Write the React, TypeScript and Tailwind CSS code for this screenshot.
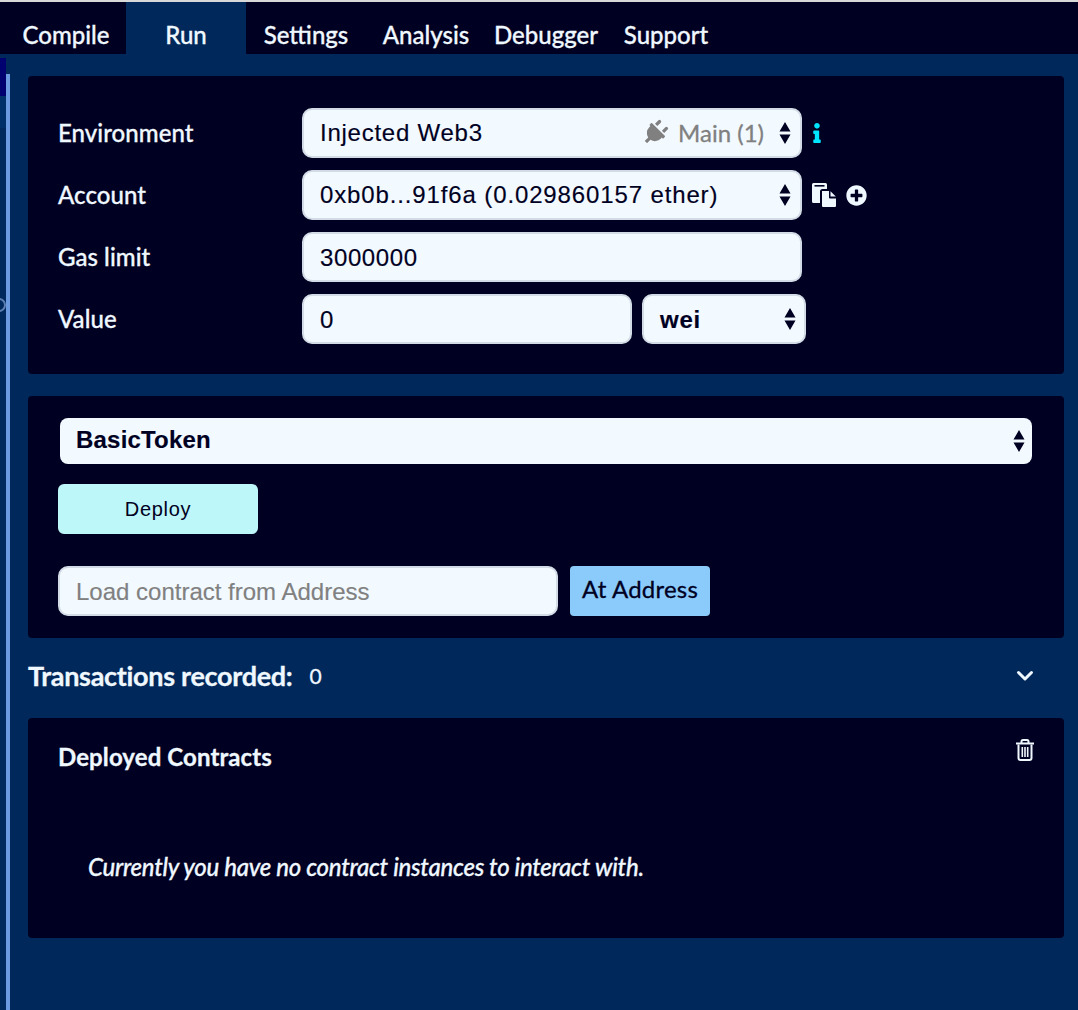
import React from "react";
import { FaInfo, FaPlug, FaPlusCircle } from "react-icons/fa";

const lato = "font-['Lato','Open_Sans',sans-serif] [-webkit-text-stroke-width:0.3px]";
const field = "font-['Liberation_Sans','Arial',sans-serif] text-[24px] text-[#000022] [-webkit-text-stroke-width:0.15px]";
const box = "flex items-center rounded-[10px] border-2 border-[#d3dce6] bg-[#f2f9ff]";

/* ===== Icons ===== */
const Arrows = ({ className = "" }: { className?: string }) => (
  <svg viewBox="0 0 12 24" className={`h-[24px] w-[12px] shrink-0 fill-[#000022] ${className}`}>
    <path d="M6 1l5.5 9.5H.5zM6 23L.5 13.5h11z" />
  </svg>
);

const PasteIcon = () => (
  <svg viewBox="0 0 26 26" className="h-[26px] w-[26px] shrink-0" fill="#f0f8ff">
    <path d="M1 2.5A1.5 1.5 0 0 1 2.5 1h12A1.5 1.5 0 0 1 16 2.5V7h-4.5A2.5 2.5 0 0 0 9 9.5V21H2.5A1.5 1.5 0 0 1 1 19.5Z" />
    <rect x="3.5" y="3" width="10" height="1.6" fill="#000022" />
    <path d="M11 9h7v6.5a1 1 0 0 0 1 1h6V24a1 1 0 0 1-1 1H12a1 1 0 0 1-1-1Z" />
    <path d="M19.5 9.2 24.8 14.5H19.5Z" />
  </svg>
);

const ChevronIcon = () => (
  <svg viewBox="0 0 18 12" className="h-[12px] w-[18px]" fill="none" stroke="#f0f8ff" strokeWidth="3" strokeLinecap="round" strokeLinejoin="round">
    <path d="M2.5 2.5 9 9l6.5-6.5" />
  </svg>
);

const TrashIcon = () => (
  <svg viewBox="0 0 20 22" className="absolute right-[29px] top-[21px] h-[22px] w-[20px]" fill="none" stroke="#f0f8ff" strokeWidth="2">
    <path d="M3.5 5.5V19a2 2 0 0 0 2 2h9a2 2 0 0 0 2-2V5.5" />
    <path d="M1 4.5h18" />
    <path d="M6.5 4V2.5a1.5 1.5 0 0 1 1.5-1.5h4a1.5 1.5 0 0 1 1.5 1.5V4" />
    <path d="M7.3 8v10M10 8v10M12.7 8v10" strokeWidth="1.6" />
  </svg>
);

/* ===== Bits ===== */
function Label({ children }: { children: React.ReactNode }) {
  return <div className={`w-[244px] shrink-0 ${lato} text-[24px] font-medium tracking-[0.05px] text-[#f0f8ff]`}>{children}</div>;
}

function Row({ label, children }: { label: string; children: React.ReactNode }) {
  return (
    <div className="flex h-[50px] items-center">
      <Label>{label}</Label>
      {children}
    </div>
  );
}

function Panel({ className, children }: { className: string; children: React.ReactNode }) {
  return <section className={`rounded-[4px] bg-[#000022] ${className}`}>{children}</section>;
}

const tabs = ["Compile", "Run", "Settings", "Analysis", "Debugger", "Support"];

export default function App() {
  return (
    <div className="flex h-[1010px] w-[1078px] flex-col overflow-hidden border-t-2 border-[#d8d8d8] bg-[#00285a]">
      {/* Tabs */}
      <nav className="flex h-[52px] shrink-0 bg-[#000022] pl-[6px]">
        {tabs.map((t) => (
          <div
            key={t}
            className={`flex w-[120px] items-center justify-center pt-[14px] ${lato} text-[24px] font-medium text-[#f0f8ff] ${
              t === "Run" ? "bg-[#00285a]" : ""
            }`}
          >
            {t}
          </div>
        ))}
      </nav>

      <div className="flex min-h-0 flex-1">
        {/* Edge of the editor pane */}
        <div className="flex w-[6px] shrink-0 flex-col bg-[#00285a]">
          <div className="mt-[4px] h-[38px] bg-[#000070]" />
          <div className="h-[32px] bg-[#003068]" />
          <div className="relative flex-1 bg-[#002a5e]">
            <div className="absolute left-[-8px] top-[170px] h-[14px] w-[14px] rounded-full border-2 border-[#5f7fb3]" />
          </div>
        </div>
        <div className="mt-[20px] w-[4px] shrink-0 bg-[#6b9ae0]" />

        <main className="ml-[18px] w-[1036px] pt-[22px]">
          {/* Environment */}
          <Panel className="flex h-[298px] flex-col gap-[12px] pl-[30px] pt-[32px]">
            <Row label="Environment">
              <div className={`${box} ${field} h-[50px] w-[500px] pl-[16px] pr-[9px]`}>
                <span className="tracking-[0.75px]">Injected Web3</span>
                <span className="ml-auto flex items-center text-[#808080]">
                  <FaPlug className="mr-[10px] rotate-45 text-[26px]" />
                  <span className={`${lato} mr-[15px] tracking-normal`}>Main (1)</span>
                </span>
                <Arrows />
              </div>
              <FaInfo className="ml-[5px] text-[20px] text-[#00e5ff]" />
            </Row>
            <Row label="Account">
              <div className={`${box} ${field} h-[50px] w-[500px] pl-[16px] pr-[9px]`}>
                <span className="tracking-[0.87px]">0xb0b...91f6a (0.029860157 ether)</span>
                <Arrows className="ml-auto" />
              </div>
              <div className="ml-[9px] flex items-center gap-[9px]">
                <PasteIcon />
                <FaPlusCircle className="text-[21px] text-[#f0f8ff]" />
              </div>
            </Row>
            <Row label="Gas limit">
              <div className={`${box} ${field} h-[50px] w-[500px] pl-[16px] pt-[2px] tracking-[0.6px]`}>3000000</div>
            </Row>
            <Row label="Value">
              <div className={`${box} ${field} h-[50px] w-[330px] pl-[16px] pt-[2px] tracking-[0.6px]`}>0</div>
              <div className={`${box} ${field} ml-[10px] h-[50px] w-[164px] pl-[16px] pr-[8px] font-bold tracking-[0.8px]`}>
                <span className="pt-[2px]">wei</span>
                <Arrows className="ml-auto" />
              </div>
            </Row>
          </Panel>

          {/* Contract */}
          <Panel className="mt-[22px] flex h-[242px] flex-col pl-[30px] pt-[22px]">
            <div className={`ml-[2px] flex h-[46px] w-[972px] items-center rounded-[8px] bg-[#f2f9ff] pb-[2px] pl-[16px] pr-[7px] ${field} font-bold tracking-[0.2px]`}>
              <span>BasicToken</span>
              <Arrows className="ml-auto mt-[2px]" />
            </div>
            <button className="mt-[20px] h-[50px] w-[200px] rounded-[6px] bg-[#bdf7f9] font-['Liberation_Sans','Arial',sans-serif] text-[20px] tracking-[0.7px] text-[#000022]">
              Deploy
            </button>
            <div className="mt-[32px] flex items-center gap-[12px]">
              <div className={`${box} ${field} h-[50px] w-[500px] pl-[16px] pt-[2px] text-[#808080]`}>Load contract from Address</div>
              <button className={`h-[50px] w-[140px] rounded-[4px] bg-[#8acbfc] pb-[5px] ${lato} text-[24px] tracking-[0.2px] text-[#000022]`}>At Address</button>
            </div>
          </Panel>

          {/* Transactions */}
          <div className="flex h-[80px] items-center pb-[4px]">
            <span className={`${lato} text-[27px] font-bold tracking-[-0.3px] text-[#f0f8ff]`}>Transactions recorded:</span>
            <span className={`${lato} ml-[17px] text-[21px] text-[#f0f8ff]`}>0</span>
            <span className="ml-auto mr-[30px] flex">
              <ChevronIcon />
            </span>
          </div>

          {/* Deployed */}
          <Panel className="relative h-[220px] pl-[30px] pt-[21px]">
            <h2 className={`${lato} text-[24px] font-bold tracking-[0.1px] text-[#f0f8ff]`}>Deployed Contracts</h2>
            <TrashIcon />
            <p className={`${lato} mt-[74px] pl-[30px] text-[24px] font-medium italic tracking-[-0.27px] text-[#f0f8ff]`}>
              Currently you have no contract instances to interact with.
            </p>
          </Panel>
        </main>
      </div>
    </div>
  );
}
